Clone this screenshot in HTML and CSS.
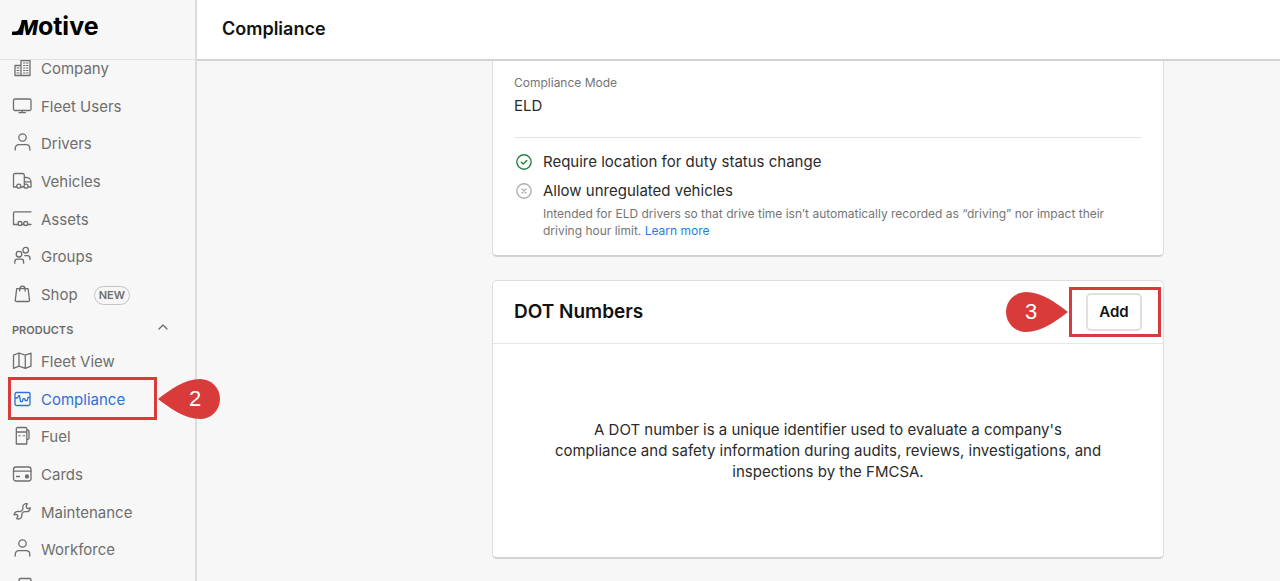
FILE: index.html
```html
<!DOCTYPE html>
<html lang="en">
<head>
<meta charset="utf-8">
<meta name="viewport" content="width=device-width, initial-scale=1">
<title>Compliance - Motive</title>
<link rel="stylesheet" href="styles.css">
</head>
<body>
<div class="app">
  <aside class="sidebar">
    <div class="brand"><a class="logo" href="#"><svg class="swash" viewBox="0 0 14 15"><path d="M0 15v-2.500c0-.7.300-1 1-1h2.500c1.500 0 2.500-.8 3.100-2L11 0H14L10.500 10.500C9.500 13.500 8 15 5 15z"/></svg><span class="logo-m">M</span>otive</a></div>
    <nav class="nav" aria-label="Main">
      <ul class="nav-list">
        <li><a class="nav-link" href="#">
          <svg class="icon" viewBox="0 0 20 20"><path d="M3 17.500V7.500h6v10M9 17.500V2.500h9v15zM3 17.500h6"/><path class="fine" d="M5 10h2M5 12.500h2M5 15h2M11.500 5h1.500M14.500 5H16M11.500 7.500h1.500M14.500 7.500H16M11.500 10h1.500M14.500 10H16M11.500 12.500h1.500M14.500 12.500H16M11.500 15h1.500M14.500 15H16"/></svg>
          Company</a></li>
        <li><a class="nav-link" href="#">
          <svg class="icon" viewBox="0 0 20 20"><rect x="1.500" y="3" width="17.500" height="11.500" rx="1.500"/><path d="M10.200 14.500v2M7 16.700h6.500"/></svg>
          Fleet Users</a></li>
        <li><a class="nav-link" href="#">
          <svg class="icon" viewBox="0 0 20 20"><circle cx="10.500" cy="4.500" r="3.700"/><path d="M3.200 17v-1.500c0-2.300 1.500-3.800 3.800-3.800h7c2.300 0 3.800 1.500 3.800 3.800V17"/></svg>
          Drivers</a></li>
        <li><a class="nav-link" href="#">
          <svg class="icon" viewBox="0 0 20 20"><path d="M4.500 16H1.500V4.300C1.500 3 2 2.500 3.300 2.500h7.200c1.300 0 1.800.5 1.800 1.800V13M12.300 6.500h2.200c2.700 0 4.500 2.200 4.500 4.500v5h-2.500M9 16h2.500M12.300 10.800H19"/><circle cx="6.800" cy="15.200" r="2"/><circle cx="14" cy="15.200" r="2"/></svg>
          Vehicles</a></li>
        <li><a class="nav-link" href="#">
          <svg class="icon" viewBox="0 0 20 20"><path d="M19 2.800H3C2 2.800 1.500 3.300 1.500 4.300V15.500h4.500M10 15.500h1.500M15.800 15.500H19"/><circle cx="8" cy="14.500" r="2"/><circle cx="13.700" cy="14.500" r="2"/></svg>
          Assets</a></li>
        <li><a class="nav-link" href="#">
          <svg class="icon" viewBox="0 0 20 20"><circle cx="7" cy="8.200" r="2.800"/><circle cx="13.700" cy="4.200" r="2.800"/><path d="M2.800 17.200v-1.500c0-1.500 1-2.500 2.500-2.500h3.800c1.500 0 2.500 1 2.500 2.500v1.500M12.800 9.700h2.600c1.600 0 2.600 1 2.600 2.600v1.200"/></svg>
          Groups</a></li>
        <li><a class="nav-link" href="#">
          <svg class="icon" viewBox="0 0 20 20"><path d="M4.700 4.700h11.400l1.400 11.300c.1 1-.4 1.500-1.400 1.500H4.700c-1 0-1.500-.5-1.400-1.500z"/><path d="M7.700 7V5c0-3.700 5.400-3.700 5.400 0v2"/></svg>
          Shop <span class="tag">NEW</span></a></li>
      </ul>
      <button class="section-toggle" type="button" aria-expanded="true">PRODUCTS
        <svg class="chevron" viewBox="0 0 12 12"><path d="M2 7 6 3l4 4"/></svg>
      </button>
      <ul class="nav-list">
        <li><a class="nav-link" href="#">
          <svg class="icon" viewBox="0 0 20 20"><path d="M1.500 4.200 7 2l6.300 2.200L19 2.200v13L13.300 17.300 7 15.200l-5.500 2.100zM7 2v13.200M13.300 4.200v13.100"/></svg>
          Fleet View</a></li>
        <li class="marked"><a class="nav-link current" href="#" aria-current="page">
          <svg class="icon" viewBox="0 0 20 20"><rect x="3" y="3.500" width="15" height="13" rx="1.500"/><path d="M3.500 9H5.500L6.700 6.700h.8l1 6h1.800l.8-3h1.600l.6 2h1.800l1-3.400H17.500"/></svg>
          Compliance</a>
          <span class="highlight highlight-nav"></span>
          <span class="pin pin-nav"><svg class="pin-shape" viewBox="0 0 62 40"><path d="M0 20C13 10 27 0 42 0a20 20 0 0 1 0 40C27 40 13 30 0 20z"/></svg><span class="pin-number">2</span></span></li>
        <li><a class="nav-link" href="#">
          <svg class="icon" viewBox="0 0 20 20"><path d="M4.300 18V3c0-1 .5-1.500 1.500-1.500h7.500c1 0 1.500.5 1.500 1.500v15zM4.300 6h10.500M14.800 4h.7c1 0 1.500.7 1.500 1.500v6.500c0 1-.8 1.500-2.200 1.500"/><path class="fine" d="M6.700 9.800h1.500M11.200 9.800h1.500"/></svg>
          Fuel</a></li>
        <li><a class="nav-link" href="#">
          <svg class="icon" viewBox="0 0 20 20"><rect x="1.500" y="3" width="17.500" height="14" rx="2.500"/><path d="M1.500 7.200H19M4.500 12.500h3"/><circle class="solid" cx="15" cy="12.500" r="1.500"/></svg>
          Cards</a></li>
        <li><a class="nav-link" href="#">
          <svg class="icon" viewBox="0 0 20 20"><path d="M15.200 1.700c-2.500-.5-5 1.500-4.300 4.300.2 1.300-.3 2-1.200 2.700-1 .8-1.800 1-2.900.8-2.300-.5-4.600 1-4.800 3.300l2.700-.4 1.300 1.600-1.300 2.600c2.800 1.200 5.700-.9 5.100-3.700-.2-1.100.2-1.800 1.200-2.600.8-.7 1.600-.9 2.700-.7 2.500.5 4.600-1.200 4.600-3.700l-2.600.8-1.600-1.800z"/></svg>
          Maintenance</a></li>
        <li><a class="nav-link" href="#">
          <svg class="icon" viewBox="0 0 20 20"><circle cx="10.500" cy="4.500" r="3.700"/><path d="M3.200 17v-1.500c0-2.300 1.500-3.800 3.800-3.800h7c2.300 0 3.800 1.500 3.800 3.800V17"/></svg>
          Workforce</a></li>
        <li><a class="nav-link" href="#" aria-label="Documents">
          <svg class="icon" viewBox="0 0 20 20"><path d="M7 18V3c0-1 .5-1.500 1.500-1.500h9c1 0 1.500.5 1.500 1.500v15z"/></svg></a></li>
      </ul>
    </nav>
  </aside>
  <div class="content">
    <header class="topbar"><h1 class="page-title">Compliance</h1></header>
    <main class="main">
      <section class="card mode-card">
        <dl class="mode"><dt class="mode-label">Compliance Mode</dt><dd class="mode-value">ELD</dd></dl>
        <ul class="settings">
          <li class="setting">
            <svg class="status status-on" viewBox="0 0 18 18"><circle cx="9" cy="9" r="7.200"/><path d="M6.200 9.200 8.200 11 11.800 7.500"/></svg>
            <p class="setting-name">Require location for duty status change</p></li>
          <li class="setting">
            <svg class="status status-off" viewBox="0 0 18 18"><circle cx="9" cy="9" r="7.200"/><path d="m7 7 4 4M11 7l-4 4"/></svg>
            <div><p class="setting-name">Allow unregulated vehicles</p>
            <p class="setting-note">Intended for ELD drivers so that drive time isn’t automatically recorded as “driving” nor impact their driving hour limit. <a class="more" href="#">Learn more</a></p></div></li>
        </ul>
      </section>
      <section class="card">
        <header class="card-header">
          <h2 class="card-title">DOT Numbers</h2>
          <div class="marked"><button class="add" type="button">Add</button>
            <span class="highlight highlight-add"></span>
            <span class="pin pin-add"><svg class="pin-shape flipped" viewBox="0 0 62 40"><path d="M0 20C13 10 27 0 42 0a20 20 0 0 1 0 40C27 40 13 30 0 20z"/></svg><span class="pin-number">3</span></span></div>
        </header>
        <div class="empty"><p class="empty-text">A DOT number is a unique identifier used to evaluate a company's compliance and safety information during audits, reviews, investigations, and inspections by the FMCSA.</p></div>
      </section>
    </main>
  </div>
</div>
</body>
</html>
```
FILE: styles.css
```css
* { box-sizing: border-box; }
body, h1, h2, p, ul, dl, dd { margin: 0; padding: 0; }
ul { list-style: none; }
a { text-decoration: none; }
button { font: inherit; cursor: pointer; }
body { font-family: Inter, "Liberation Sans", sans-serif; font-size: 15px; line-height: 20px; color: #2b2b2b; background: #f7f7f7; }
svg { flex: none; fill: none; stroke: currentColor; stroke-linecap: round; stroke-linejoin: round; }

.app { display: flex; height: 100vh; overflow: hidden; }

.sidebar { position: relative; z-index: 2; flex: none; width: 197px; border-right: 2px solid #dcdcdc; color: #6b6b6b; }
.brand { position: relative; z-index: 1; height: 60px; padding: 10px 12px; background: #f7f7f7; border-bottom: 1px solid #e0e0e0; }
.logo { display: flex; align-items: baseline; color: #000; font-size: 25px; font-weight: 700; line-height: 32px; }
.logo-m { font-size: 20px; font-style: italic; font-weight: 800; }
.swash { width: 14px; height: 15px; margin-right: -7px; fill: #000; stroke: none; }

.nav { margin-top: -10px; }
.nav-list { display: grid; grid-auto-rows: 1fr; min-height: 264px; }
.nav-link { display: flex; align-items: center; gap: 9px; height: 100%; padding-left: 12px; color: #6e6e6e; }
.current { color: #2f6fd6; }
.icon { width: 20px; height: 20px; margin-bottom: 2px; stroke-width: 1.3; }
.fine { stroke-width: 1; }
.solid { fill: currentColor; }
.tag { margin-left: 7px; padding: 0 4px; border: 1px solid #c4c4c4; border-radius: 10px; font-size: 11px; font-weight: 600; line-height: 17px; }
.section-toggle { display: flex; align-items: center; justify-content: space-between; width: 100%; padding: 6px 26px 3px 12px; border: 0; background: none; color: #6b6b6b; font-size: 11px; font-weight: 600; line-height: 20px; }
.chevron { width: 12px; height: 12px; margin-bottom: 4px; stroke-width: 1.3; }

.content { flex: 1; min-width: 0; }
.topbar { position: relative; z-index: 1; height: 61px; padding: 16px 25px; background: #fff; border-bottom: 2px solid #d2d2d2; }
.page-title { font-size: 18px; font-weight: 600; line-height: 26px; color: #111; }
.main { display: grid; gap: 23px; margin-top: -10px; padding: 0 116px 22px 295px; }
.card { background: #fff; border: 1px solid #dedede; border-bottom: 2px solid #d2d2d2; border-radius: 5px; }
.mode-card { padding: 21px 21px 16px; }
.mode { padding-bottom: 21px; border-bottom: 1px solid #e4e4e4; }
.mode-label { font-size: 12px; color: #757575; }
.mode-value { padding-top: 3px; }
.settings { display: grid; gap: 9px; padding-top: 14px; }
.setting { display: flex; gap: 10px; padding-left: 1px; }
.status { width: 18px; height: 18px; margin-top: 1px; stroke-width: 1.4; }
.status-on { color: #278443; }
.status-off { color: #b0b0b0; }
.setting-note { padding-top: 4px; font-size: 12px; line-height: 17px; color: #757575; }
.more { color: #1f7ced; }

.card-header { display: flex; align-items: center; justify-content: space-between; padding: 12px 21px; border-bottom: 1px solid #e6e6e6; }
.card-title { font-size: 19px; font-weight: 600; line-height: 26px; color: #111; }
.add { display: block; width: 56px; height: 38px; padding: 0; border: 2px solid #e0e0e0; border-radius: 5px; background: #fff; color: #111; font-weight: 600; }
.empty { display: flex; justify-content: center; padding: 75px 21px; }
.empty-text { max-width: 550px; line-height: 21px; text-align: center; }

.marked { position: relative; }
.highlight { position: absolute; border: 3px solid #d93a3a; pointer-events: none; }
.highlight-nav { left: 8px; right: 38px; top: -4px; bottom: -2px; }
.highlight-add { left: -17px; right: -19px; top: -6px; bottom: -6px; }
.pin { position: absolute; width: 62px; height: 40px; color: #fff; font-family: "Liberation Sans", Arial, sans-serif; font-size: 22px; line-height: 40px; text-align: center; }
.pin-shape { position: absolute; inset: 0; fill: #d93a3a; stroke: none; }
.flipped { transform: scaleX(-1); }
.pin-number { position: relative; display: block; }
.pin-nav { left: 158px; top: -2px; }
.pin-nav .pin-number { padding-left: 12px; }
.pin-add { right: 74px; top: -1px; }
.pin-add .pin-number { padding-right: 12px; }
```
